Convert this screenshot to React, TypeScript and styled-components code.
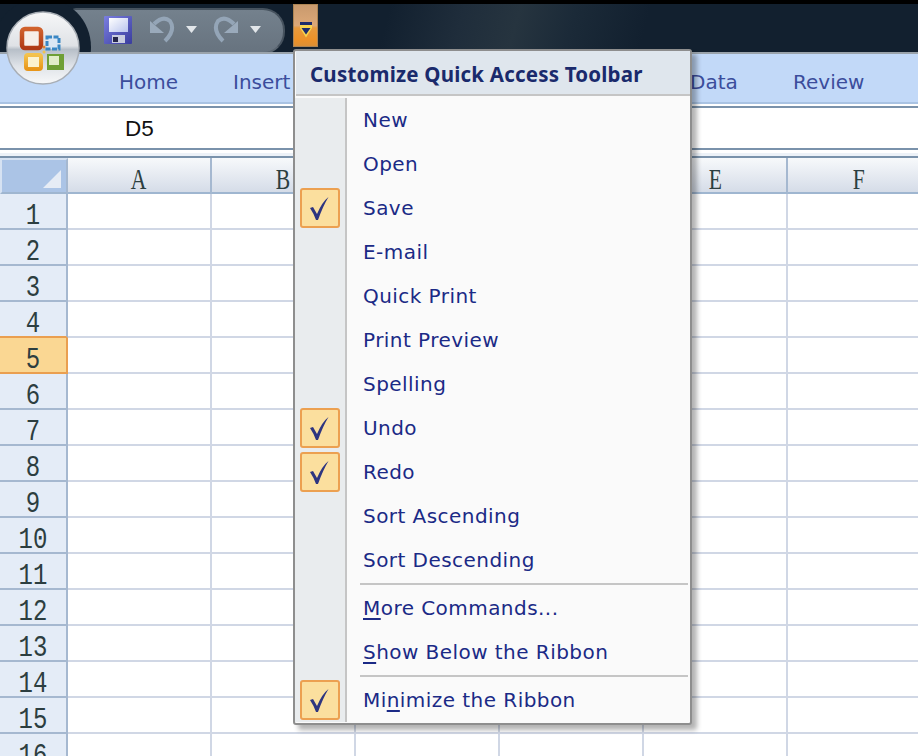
import React from "react";
import styled, { createGlobalStyle } from "styled-components";

const GlobalStyle = createGlobalStyle`
  html, body {
    margin: 0;
    padding: 0;
    background: #fff;
  }
`;

const Window = styled.div`
  position: relative;
  width: 918px;
  height: 756px;
  overflow: hidden;
  background: #fff;
  font-family: "DejaVu Sans", sans-serif;
`;

const TitleBar = styled.div`
  position: relative;
  box-sizing: border-box;
  height: 54px;
  padding: 2px 0 0 70px;
  display: flex;
  align-items: flex-start;
  overflow: hidden;
  border-top: 4px solid #000;
  border-bottom: 2px solid #9aa3ab;
  background: linear-gradient(105deg, #12202f 0%, #12202f 42%, #1f2d3b 50%, #26343f 56%, #1b2a38 62%, #12202f 70%, #12202f 100%);
`;

const QuickAccess = styled.div`
  box-sizing: border-box;
  width: 215px;
  height: 46px;
  margin-top: 2px;
  display: flex;
  align-items: center;
  padding: 0 0 2px 32px;
  border: 2px solid #46525e;
  border-bottom-color: #5a6570;
  border-radius: 6px 22px 22px 6px;
  background: linear-gradient(#74818d, #67737f);
`;

const ButtonRing = styled.div`
  position: absolute;
  left: -7px;
  top: -6px;
  width: 98px;
  height: 98px;
  border-radius: 50%;
  background: #12202f;
`;

const IconGap = styled.span<{ $width: number }>`
  width: ${(p) => p.$width}px;
  flex: none;
`;

const CustomizeButton = styled.div`
  box-sizing: border-box;
  width: 25px;
  height: 43px;
  margin: -2px 0 0 8px;
  padding-top: 17px;
  display: flex;
  align-items: flex-start;
  justify-content: center;
  border: 1px solid #ad8554;
  background: linear-gradient(#c99a6e 0%, #dca878 50%, #e79a3e 56%, #ec9128 85%, #dc8f35 100%);
`;

const OfficeButton = styled.svg`
  position: absolute;
  left: 5px;
  top: 10px;
`;

const Tabs = styled.div`
  box-sizing: border-box;
  height: 50px;
  padding: 10px 0 0 119px;
  display: flex;
  background: #c2d9f8;
  border-bottom: 2px solid #a9c3e3;
`;

const Tab = styled.div<{ $width: number }>`
  width: ${(p) => p.$width}px;
  flex: none;
  font-size: 20px;
  line-height: 36px;
  color: #3b4d9c;
`;

const FormulaBar = styled.div`
  box-sizing: border-box;
  height: 44px;
  margin-top: 2px;
  padding-left: 125px;
  border-top: 2px solid #7a92ab;
  border-bottom: 2px solid #7a92ab;
  font-family: "Liberation Sans", sans-serif;
  font-size: 22.5px;
  line-height: 42px;
  color: #111;
`;

const FormulaGap = styled.div`
  box-sizing: border-box;
  height: 8px;
  border-top: 3px solid #fff;
  border-bottom: 2px solid #7a92ab;
  background: #edf2f8;
`;

const Sheet = styled.div`
  display: grid;
  grid-template-columns: 68px repeat(6, 144px);
  grid-auto-rows: 36px;
`;

const Corner = styled.div`
  box-sizing: border-box;
  border: 2px solid #d6e2f2;
  border-right: 2px solid #a5b8d0;
  border-bottom: 2px solid #9fb6d0;
  background: #abc4e6;
  display: flex;
  justify-content: flex-end;
  align-items: flex-end;
  padding: 0 5px 4px 0;
`;

const CornerMark = styled.div`
  width: 0;
  height: 0;
  border-left: 18px solid transparent;
  border-bottom: 18px solid #e6ecf5;
`;

const ColHead = styled.div`
  box-sizing: border-box;
  display: flex;
  align-items: center;
  justify-content: center;
  padding-top: 9px;
  border-right: 2px solid #a5b8d0;
  border-bottom: 2px solid #9fb6d0;
  background: linear-gradient(#f7f9fb, #d5dce8);
  font-family: "Liberation Serif", serif;
  font-size: 24px;
  color: #2c3e40;
`;

const ColLetter = styled.span`
  display: inline-block;
  transform: scale(0.9, 1.25);
`;

const RowHead = styled.div<{ $active?: boolean; $beforeActive?: boolean }>`
  box-sizing: border-box;
  display: flex;
  align-items: center;
  justify-content: center;
  padding-top: 11px;
  border-right: 2px solid ${(p) => (p.$active ? "#ea9f50" : "#a5b8d0")};
  border-bottom: 2px solid ${(p) => (p.$active || p.$beforeActive ? "#ea9f50" : "#a5b8d0")};
  background: ${(p) => (p.$active ? "#fad793" : "#e4ecf7")};
  font-family: "Liberation Mono", monospace;
  font-size: 24px;
  color: #2c3e40;
`;

const RowNumber = styled.span`
  display: inline-block;
  transform: scaleY(1.22);
`;

const Cell = styled.div`
  box-sizing: border-box;
  border-right: 2px solid #d0d7e5;
  border-bottom: 2px solid #d0d7e5;
  background: #fff;
`;

const Menu = styled.div`
  position: absolute;
  left: 293px;
  top: 49px;
  box-sizing: border-box;
  width: 399px;
  height: 676px;
  border: 2px solid #8e8e8e;
  border-radius: 3px;
  background: #fafafa;
  box-shadow: 5px 5px 5px rgba(0, 0, 0, 0.3);
  font-size: 20px;
  letter-spacing: 0.45px;
  color: #1b2a86;
`;

const MenuTitle = styled.div`
  box-sizing: border-box;
  height: 45px;
  padding: 2px 0 0 14px;
  margin-left: 1px;
  font-family: "Noto Sans", sans-serif;
  font-size: 20.5px;
  font-weight: bold;
  line-height: 42px;
  letter-spacing: 0.2px;
  color: #1a2a6c;
  background: #dfe6ed;
  border-bottom: 2px solid #c5c5c5;
`;

const MenuBody = styled.div`
  padding-top: 2px;
`;

const MenuRow = styled.div`
  display: grid;
  grid-template-columns: 52px 1fr;
  height: 44px;
`;

const Gutter = styled.div`
  box-sizing: border-box;
  padding-left: 5px;
  display: flex;
  align-items: center;
  background: #e9ecee;
  border-right: 2px solid #c5c5c5;
`;

const CheckBox = styled.div`
  box-sizing: border-box;
  width: 40px;
  height: 40px;
  display: flex;
  align-items: center;
  justify-content: center;
  border: 2px solid #eca050;
  border-radius: 3px;
  background: #fbdf9e;
`;

const Label = styled.div`
  padding-left: 16px;
  line-height: 44px;
  white-space: nowrap;
`;

const Mnemonic = styled.u`
  text-underline-offset: 3px;
`;

const SeparatorRow = styled.div`
  display: grid;
  grid-template-columns: 52px 1fr;
  height: 4px;
`;

const SeparatorLine = styled.div`
  height: 2px;
  margin: 1px 2px 0 13px;
  background: #c5c5c5;
`;

function Check() {
  return (
    <svg width="36" height="36" viewBox="0 0 36 36">
      <path d="M8 18 L11 17 L15 24 Q20 12 26.5 7 Q21 16 16 30 L14 30 Q12 24 8 18 Z" fill="#2e3580" />
    </svg>
  );
}

function SaveIcon() {
  return (
    <svg width="28" height="28" viewBox="0 0 28 28">
      <defs>
        <linearGradient id="disk" x1="0" y1="0" x2="1" y2="1">
          <stop offset="0" stopColor="#7a7ee0" />
          <stop offset="1" stopColor="#3a3d9e" />
        </linearGradient>
        <linearGradient id="diskLabel" x1="0" y1="0" x2="1" y2="1">
          <stop offset="0" stopColor="#ffffff" />
          <stop offset="1" stopColor="#b9c4ee" />
        </linearGradient>
      </defs>
      <rect width="28" height="28" rx="1" fill="url(#disk)" />
      <rect x="5" y="2" width="19" height="14" fill="url(#diskLabel)" />
      <rect x="8" y="19" width="13" height="8" fill="#c9cde0" />
      <rect x="9" y="21" width="5" height="5" fill="#26264a" />
    </svg>
  );
}

function UndoIcon({ flip }: { flip?: boolean }) {
  return (
    <svg width="26" height="28" viewBox="0 0 26 28" style={flip ? { transform: "scaleX(-1)" } : undefined}>
      <path d="M0 5 L0 17 L14 17 Z" fill="#9aaabb" />
      <path d="M4 8 Q13 -1 20 5 Q26 14 15 25" fill="none" stroke="#94a5b7" strokeWidth="4" />
    </svg>
  );
}

function DropArrow() {
  return (
    <svg width="11" height="8" viewBox="0 0 11 8">
      <path d="M0 0 H11 L5.5 7 Z" fill="#e2e6ea" />
    </svg>
  );
}

function CustomizeGlyph() {
  return (
    <svg width="12" height="16" viewBox="0 0 12 16">
      <rect y="0" width="12" height="3" fill="#1c2b6c" />
      <rect y="3" width="12" height="3" fill="#f8d44f" />
      <path d="M0 6 H12 L6 15.5 Z" fill="#f8d44f" />
      <path d="M1.5 6 H10.5 L6 12.5 Z" fill="#1c2b6c" />
    </svg>
  );
}

function OfficeLogo() {
  return (
    <OfficeButton width="76" height="76" viewBox="0 0 76 76">
      <defs>
        <linearGradient id="orb" x1="0" y1="0" x2="0" y2="1">
          <stop offset="0" stopColor="#f6f7f8" />
          <stop offset="0.47" stopColor="#dfe2e6" />
          <stop offset="0.52" stopColor="#b7bfc8" />
          <stop offset="0.75" stopColor="#dfe3e8" />
          <stop offset="1" stopColor="#f7f8f9" />
        </linearGradient>
        <linearGradient id="redPane" x1="0" y1="0" x2="0" y2="1">
          <stop offset="0" stopColor="#d0612c" />
          <stop offset="1" stopColor="#b03a14" />
        </linearGradient>
        <linearGradient id="orangePane" x1="0" y1="0" x2="0" y2="1">
          <stop offset="0" stopColor="#f4c24c" />
          <stop offset="1" stopColor="#e8961a" />
        </linearGradient>
      </defs>
      <circle cx="38" cy="38" r="36" fill="url(#orb)" stroke="#a8aeb5" strokeWidth="1.5" />
      <rect x="17" y="19" width="19" height="19" rx="3" fill="#f6efe8" stroke="url(#redPane)" strokeWidth="4.5" />
      <rect x="42" y="27" width="12" height="12" fill="#dbe7f4" stroke="#3a87c4" strokeWidth="3" strokeDasharray="5 1.5" />
      <rect x="21" y="45" width="15" height="14" rx="2" fill="#fbf2cf" stroke="url(#orangePane)" strokeWidth="4" />
      <path d="M42 44 H59 V60 H42 Z" fill="#6f9f35" />
      <rect x="44" y="46" width="10" height="9" fill="#e2edc8" />
      <circle cx="39" cy="37" r="1.5" fill="#e2802c" />
      <circle cx="39" cy="42" r="1.5" fill="#efc34e" />
    </OfficeButton>
  );
}

const columns = ["A", "B", "C", "D", "E", "F"];
const rows = Array.from({ length: 16 }, (_, i) => i + 1);

type Item = { label: React.ReactNode; checked?: boolean };

const commands: Item[] = [
  { label: "New" },
  { label: "Open" },
  { label: "Save", checked: true },
  { label: "E-mail" },
  { label: "Quick Print" },
  { label: "Print Preview" },
  { label: "Spelling" },
  { label: "Undo", checked: true },
  { label: "Redo", checked: true },
  { label: "Sort Ascending" },
  { label: "Sort Descending" },
];

function Row({ label, checked }: Item) {
  return (
    <MenuRow>
      <Gutter>
        {checked && (
          <CheckBox>
            <Check />
          </CheckBox>
        )}
      </Gutter>
      <Label>{label}</Label>
    </MenuRow>
  );
}

function Separator() {
  return (
    <SeparatorRow>
      <Gutter />
      <SeparatorLine />
    </SeparatorRow>
  );
}

export default function App() {
  return (
    <Window>
      <GlobalStyle />
      <TitleBar>
        <ButtonRing />
        <QuickAccess>
          <SaveIcon />
          <IconGap $width={18} />
          <UndoIcon />
          <IconGap $width={10} />
          <DropArrow />
          <IconGap $width={15} />
          <UndoIcon flip />
          <IconGap $width={12} />
          <DropArrow />
        </QuickAccess>
        <CustomizeButton>
          <CustomizeGlyph />
        </CustomizeButton>
      </TitleBar>
      <OfficeLogo />
      <Tabs>
        <Tab $width={114}>Home</Tab>
        <Tab $width={457}>Insert</Tab>
        <Tab $width={103}>Data</Tab>
        <Tab $width={100}>Review</Tab>
      </Tabs>
      <FormulaBar>D5</FormulaBar>
      <FormulaGap />
      <Sheet>
        <Corner>
          <CornerMark />
        </Corner>
        {columns.map((c) => (
          <ColHead key={c}>
            <ColLetter>{c}</ColLetter>
          </ColHead>
        ))}
        {rows.map((r) => (
          <React.Fragment key={r}>
            <RowHead $active={r === 5} $beforeActive={r === 4}>
              <RowNumber>{r}</RowNumber>
            </RowHead>
            {columns.map((c) => (
              <Cell key={c} />
            ))}
          </React.Fragment>
        ))}
      </Sheet>
      <Menu>
        <MenuTitle>Customize Quick Access Toolbar</MenuTitle>
        <MenuBody>
          {commands.map((item, i) => (
            <Row key={i} {...item} />
          ))}
          <Separator />
          <Row
            label={
              <>
                <Mnemonic>M</Mnemonic>ore Commands...
              </>
            }
          />
          <Row
            label={
              <>
                <Mnemonic>S</Mnemonic>how Below the Ribbon
              </>
            }
          />
          <Separator />
          <Row
            checked
            label={
              <>
                Mi<Mnemonic>n</Mnemonic>imize the Ribbon
              </>
            }
          />
        </MenuBody>
      </Menu>
    </Window>
  );
}
